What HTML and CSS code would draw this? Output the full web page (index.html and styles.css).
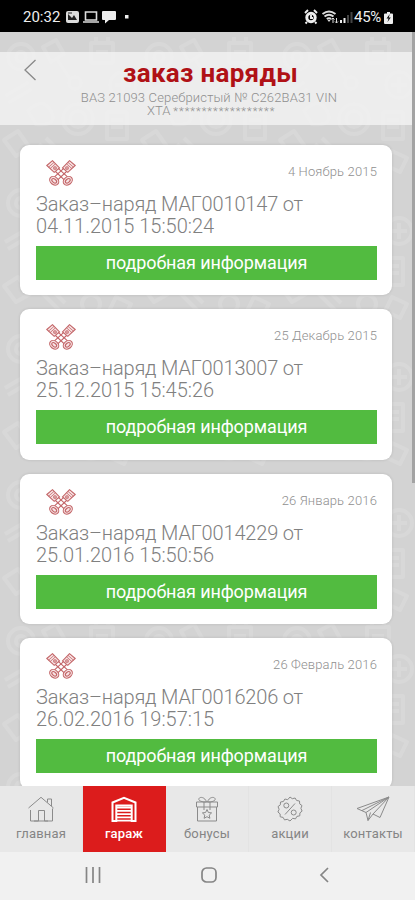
FILE: index.html
```
<!DOCTYPE html>
<html lang="ru">
<head>
<meta charset="utf-8">
<title>Заказ наряды</title>
<link rel="stylesheet" href="styles.css">
</head>
<body>
<svg class="defs" aria-hidden="true">
  <symbol id="pistons" viewBox="0 0 30 26">
    <g id="piston" fill="none" stroke="#b94b4e" stroke-width="1.100">
      <path d="M.8 5.500 6.500.7l7 7.200-5.300 4.400z" fill="#f6dfe0"/>
      <path d="M2.500 7.200 8 2.400M4 8.700l5.400-4.800" stroke-width=".8"/>
      <circle cx="9" cy="8" r="1.300"/>
      <path d="m9.500 11.500 9 8.700M12.500 8.700l9 8.200"/>
      <ellipse cx="21.800" cy="20.800" rx="4.900" ry="3.800" transform="rotate(-40 21.800 20.800)" fill="#f6dfe0"/>
      <ellipse cx="21.800" cy="20.800" rx="2.800" ry="1.700" transform="rotate(-40 21.800 20.800)"/>
    </g>
    <use href="#piston" transform="matrix(-1 0 0 1 30 0)"/>
  </symbol>
</svg>
<div class="phone">
  <header class="status">
    <span class="clock">20:32</span>
    <svg class="status-left" viewBox="0 0 64 14">
      <rect x="0" y="1" width="13" height="12" rx="2" fill="#ddd"/>
      <path d="M2 10V4l4 4 2-3 3 5z" fill="#222"/>
      <path d="M2 3h4" stroke="#222"/>
      <path d="M19.500 2h11v8h-11zM17 12h16" fill="none" stroke="#ddd" stroke-width="1.600"/>
      <path d="M37 1h12q1 0 1 1v7q0 1-1 1h-6l-4 3.500V10h-2q-1 0-1-1V2q0-1 1-1z" fill="#eee"/>
      <rect x="59" y="5" width="3.500" height="3.500" fill="#eee"/>
    </svg>
    <svg class="status-right" viewBox="0 0 50 16">
      <circle cx="7" cy="8.500" r="4.200" fill="none" stroke="#eee" stroke-width="3"/>
      <path d="M7 6v3h2M1 4l3-3M13 4l-3-3M3 13l-1.500 1.500M11 13l1.500 1.500" stroke="#eee" stroke-width="1.900" fill="none"/>
      <path d="M18.500 5q6.500-5 13 0M20.500 7.500q4.500-3.500 9 0M22.800 10q2.200-1.500 4.400 0" fill="none" stroke="#ddd" stroke-width="1.900"/>
      <path d="m25 13-1.500-2h3z" fill="#ddd"/>
      <path d="M29 14V9m-1.500 1.500L29 9l1.500 1.500M32.500 9v5M31 12.500l1.500 1.500 1.500-1.500" fill="none" stroke="#ddd"/>
      <path d="M37 14v-3M40.500 14V9" stroke="#eee" stroke-width="2"/>
      <path d="M44 14V6M47.500 14V3" stroke="#444" stroke-width="2"/>
    </svg>
    <span class="percent">45%</span>
    <svg class="battery" viewBox="0 0 9 13">
      <path d="M3 1h3v1.500h2q1 0 1 1V12q0 1-1 1H1q-1 0-1-1V3.500q0-1 1-1h2z" fill="#eee"/>
      <path d="M5.800 3 2.500 7.500h2L3.500 11l3.300-4.500h-2z" fill="#111"/>
    </svg>
  </header>

  <main class="screen">
    <svg class="wallpaper" aria-hidden="true">
      <defs>
        <pattern id="parts" width="138" height="146" patternUnits="userSpaceOnUse">
          <g fill="none" stroke="#dedede" stroke-width="4" stroke-linejoin="round">
            <circle cx="21" cy="25" r="13"/><circle cx="21" cy="25" r="5"/>
            <path d="m43 15 13-7 8 14-13 8zM57 27l13 20"/><circle cx="75" cy="51" r="6"/>
            <path d="M91 11h22v20H91zM96 5v6M108 5v6M96 20h12"/>
            <circle cx="123" cy="53" r="13"/><path d="M115 53h16M123 45v16"/>
            <path d="m5 64 24-14M8 71l24-14M28 79q15-15 23 0t-15 13z"/>
            <circle cx="78" cy="87" r="15"/><circle cx="78" cy="87" r="8"/>
            <path d="M107 80h20v27h-20zM111 88h12M111 95h12"/>
            <path d="m4 108 14-9 12 17-14 8zM39 112l20 20M46 106l19 19"/>
            <circle cx="91" cy="126" r="9"/><path d="m116 119 15 7-7 14-15-7z"/>
          </g>
        </pattern>
      </defs>
      <rect width="100%" height="100%" fill="url(#parts)"/>
    </svg>

    <section class="heading">
      <svg class="back" viewBox="0 0 14 22"><path d="M12.500 1 2 11l10.500 10" fill="none" stroke="#888" stroke-width="1.300"/></svg>
      <h1>заказ наряды</h1>
      <p class="vehicle">ВАЗ 21093 Серебристый № С262ВА31 VIN</p>
      <p class="vin"><span>ХТА</span><span class="mask">******************</span></p>
    </section>

    <section class="orders">
      <article class="card">
        <div class="meta"><svg class="pistons"><use href="#pistons"/></svg><time>4 Ноябрь 2015</time></div>
        <h2><span class="order">Заказ–наряд МАГ0010147 от</span><span class="stamp">04.11.2015 15:50:24</span></h2>
        <a class="details">подробная информация</a>
      </article>
      <article class="card">
        <div class="meta"><svg class="pistons"><use href="#pistons"/></svg><time>25 Декабрь 2015</time></div>
        <h2><span class="order">Заказ–наряд МАГ0013007 от</span><span class="stamp">25.12.2015 15:45:26</span></h2>
        <a class="details">подробная информация</a>
      </article>
      <article class="card">
        <div class="meta"><svg class="pistons"><use href="#pistons"/></svg><time>26 Январь 2016</time></div>
        <h2><span class="order">Заказ–наряд МАГ0014229 от</span><span class="stamp">25.01.2016 15:50:56</span></h2>
        <a class="details">подробная информация</a>
      </article>
      <article class="card">
        <div class="meta"><svg class="pistons"><use href="#pistons"/></svg><time>26 Февраль 2016</time></div>
        <h2><span class="order">Заказ–наряд МАГ0016206 от</span><span class="stamp">26.02.2016 19:57:15</span></h2>
        <a class="details">подробная информация</a>
      </article>
    </section>
    <i class="scrollbar"></i>
  </main>

  <nav class="tabs">
    <a class="tab">
      <svg viewBox="0 0 34 26"><path d="M4.500 12 17 1.300 29.500 12M23.500 6.500V3h4v7M6.500 14v11h8V14.500h6V25h8V12.500M10 25h14" /></svg>
      <span>главная</span>
    </a>
    <a class="tab active">
      <svg viewBox="0 0 34 26"><path d="M5.500 25V6.500L17 1.800l11.500 4.700V25h-3.800V9.500H9.300V25z" stroke-width="2"/><path d="M10 11.500h14M10 14.800h14M10 18.100h14M10 21.400h14M10 24.700h14" stroke-width="1.800"/></svg>
      <span>гараж</span>
    </a>
    <a class="tab">
      <svg viewBox="0 0 34 26"><path d="M6.500 6h21v5h-21zM7.500 11v14h19V11M14 6v5M20 6v5M14 11v3M20 11v3M16.500 6C11 6 8 4.500 9 2.500S15 1 16.500 6M17.500 6C23 6 26 4.500 25 2.500S19 1 17.500 6"/><path d="m17 13.500 1.400 3 3.200.4-2.400 2.200.7 3.200-2.900-1.600-2.900 1.600.7-3.200-2.400-2.200 3.200-.4z"/></svg>
      <span>бонусы</span>
    </a>
    <a class="tab">
      <svg viewBox="0 0 34 26"><path d="m17 1 2.300 1.700 2.800-.7 1.500 2.500 2.900.5.200 2.900 2.300 1.700-1.100 2.700 1.200 2.800-2.200 1.800-.1 2.900-2.900.6-1.400 2.500-2.800-.6L17 25l-2.700-1.700-2.800.6-1.400-2.500-2.900-.6-.1-2.900L4.900 16l1.200-2.700L5 10.600l2.300-1.700L7.500 6l2.900-.5L11.900 3l2.800.7z"/><circle cx="13.300" cy="9.500" r="2.500"/><circle cx="20.700" cy="16.500" r="2.500"/><path d="m22 7.500-10 11"/></svg>
      <span>акции</span>
    </a>
    <a class="tab">
      <svg viewBox="0 0 34 26"><path d="M1 12.500 33 1 24 21.500l-7-3.500-5 6.500-2-8zM33 1 10 16.500M33 1 17 18M33 1 6 14.500M12 24.500l2.500-8"/></svg>
      <span>контакты</span>
    </a>
  </nav>
  <footer class="system">
    <svg viewBox="0 0 16 16"><path d="M1.500 0v16M8 0v16M14.500 0v16"/></svg>
    <svg viewBox="0 0 16 16"><rect x="1" y="1" width="14" height="14" rx="4.500"/></svg>
    <svg viewBox="0 0 16 16"><path d="M11 1 4 8l7 7"/></svg>
  </footer>
</div>
</body>
</html>
```

FILE: styles.css
```
* { box-sizing: border-box; }

body {
  margin: 0;
  font-family: Roboto, "Liberation Sans", sans-serif;
}

.defs { position: absolute; width: 0; height: 0; }

.phone {
  display: flex;
  flex-direction: column;
  width: 415px;
  height: 900px;
  overflow: hidden;
}

.status {
  flex: none;
  display: flex;
  align-items: center;
  height: 32px;
  padding: 2px 22px 0 23px;
  background: #000;
  color: #eee;
  font-size: 15px;
  letter-spacing: 0;
}
.clock { width: 43px; }
.status-left { width: 64px; height: 14px; }
.status-right { width: 50px; height: 16px; margin-left: auto; }
.percent { width: 29px; margin: 0 1px 0 0; letter-spacing: -0.3px; }
.battery { width: 9px; height: 13px; }

.screen {
  position: relative;
  flex: none;
  height: 754px;
  overflow: hidden;
  background: #d3d3d3;
}
.wallpaper { position: absolute; inset: 0; width: 100%; height: 100%; opacity: .5; }

.heading {
  position: relative;
  height: 73px;
  margin-top: 20px;
  padding-top: 8px;
  background: rgba(240, 240, 240, .88);
  text-align: center;
}
.back { position: absolute; left: 23px; top: 7px; width: 14px; height: 22px; }
h1 {
  margin: 0 0 0 6px;
  color: #b01116;
  font-size: 26px;
  line-height: 27px;
  font-weight: 700;
  letter-spacing: .3px;
}
.vehicle {
  margin: 3px 0 0 3px;
  color: #8f8f8f;
  font-size: 13px;
  line-height: 15px;
  font-weight: 300;
  letter-spacing: .15px;
}
.vin {
  display: flex;
  align-items: center;
  margin: -1px 0 0 147px;
  color: #8f8f8f;
  font-size: 13px;
  line-height: 13px;
  font-weight: 300;
}
.mask {
  margin: 2px 0 0 3px;
  font-size: 11px;
  line-height: 11px;
  letter-spacing: 1px;
}

.orders {
  position: relative;
  display: flex;
  flex-direction: column;
  gap: 14px;
  padding: 20px 23px 0 20px;
}
.card {
  flex: none;
  height: 150.400px;
  padding: 15px 15px 0 16px;
  background: #fff;
  border-radius: 9px;
  box-shadow: 0 0 3px rgba(0, 0, 0, .14);
}
.meta {
  display: flex;
  justify-content: space-between;
  height: 33px;
  padding-left: 10px;
}
.pistons { width: 30px; height: 26px; opacity: .85; }
time {
  color: #8f8f8f;
  font-size: 13px;
  line-height: 23px;
  font-weight: 300;
  letter-spacing: .15px;
}
h2 {
  margin: 0;
  color: #808080;
  font-size: 20px;
  line-height: 22px;
  font-weight: 300;
  white-space: nowrap;
}
h2 span { display: block; }
.order { letter-spacing: -.17px; }
.details {
  display: block;
  height: 34px;
  margin-top: 9px;
  background: #52bb40;
  color: #fff;
  font-size: 18px;
  line-height: 33px;
  letter-spacing: -.12px;
  text-align: center;
}

.scrollbar {
  position: absolute;
  right: 0;
  top: 0;
  width: 3px;
  height: 451px;
  background: #a3a3a3;
}

.tabs {
  flex: none;
  display: grid;
  grid-template-columns: repeat(5, 1fr);
  height: 66px;
  background: #e8e8e8;
}
.tab {
  display: flex;
  flex-direction: column;
  align-items: center;
  padding-top: 10px;
  border-right: 1px solid #e3e3e3;
  color: #858585;
  font-size: 13px;
  line-height: 16px;
  letter-spacing: .15px;
}
.tab svg { width: 34px; height: 26px; margin-bottom: 4px; fill: none; stroke: #8b8b8b; stroke-width: 1; }
.tab.active { background: #dc1c1c; border-color: #dc1c1c; color: #fff; font-weight: 500; }
.tab.active svg { stroke: #fff; }

.system {
  flex: none;
  display: flex;
  justify-content: space-between;
  align-items: center;
  height: 48px;
  padding: 0 82px 2px 85px;
  background: #f1f1f1;
}
.system svg { width: 16px; height: 16px; fill: none; stroke: #858585; stroke-width: 1.700; }
```
